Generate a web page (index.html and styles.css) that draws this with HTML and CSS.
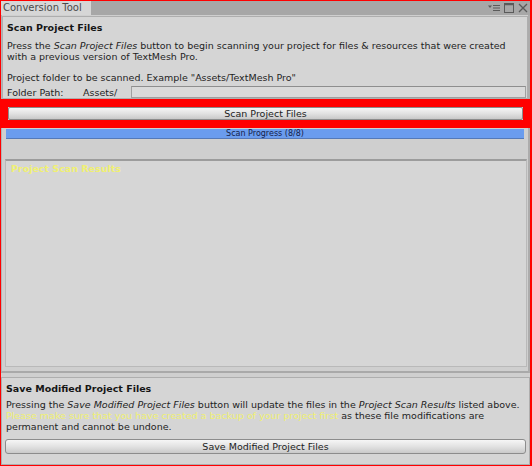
FILE: index.html
```html
<!DOCTYPE html>
<html>
<head>
<meta charset="utf-8">
<link rel="stylesheet" href="styles.css">
</head>
<body>
<div class="window">
  <div class="tabbar">
    <div class="tab">Conversion Tool</div>
    <div class="tab-icons">
      <svg class="ico-menu" width="12" height="8" viewBox="0 0 12 8">
        <path d="M0 1.5h4L2 4z" fill="#5a5a5a"/>
        <path d="M5 1.5h7M5 4h7M5 6.5h7" stroke="#5a5a5a" stroke-width="1.2"/>
      </svg>
      <svg class="ico-max" width="10" height="10" viewBox="0 0 10 10">
        <rect x="0.5" y="0.5" width="9" height="9" fill="none" stroke="#5a5a5a"/>
        <path d="M0 1.5h10" stroke="#5a5a5a" stroke-width="1.5"/>
      </svg>
      <svg class="ico-close" width="10" height="10" viewBox="0 0 10 10">
        <path d="M1 1l8 8M9 1l-8 8" stroke="#5a5a5a" stroke-width="1.3"/>
      </svg>
    </div>
  </div>

  <div class="scan-area">
    <section class="box scan-box">
      <h2 class="box-title">Scan Project Files</h2>
      <p class="text">Press the <i>Scan Project Files</i> button to begin scanning your project for files &amp; resources that were created<br>with a previous version of TextMesh Pro.</p>
      <p class="text spaced">Project folder to be scanned. Example "Assets/TextMesh Pro"</p>
      <div class="folder-row">
        <span class="folder-label">Folder Path:</span>
        <span class="folder-prefix">Assets/</span>
        <span class="folder-input"></span>
      </div>
    </section>

    <div class="highlight">
      <button class="btn btn-scan">Scan Project Files</button>
    </div>
    <div class="progress">Scan Progress (8/8)</div>

    <div class="results">
      <span class="results-title">Project Scan Results</span>
    </div>
  </div>

  <section class="box save-box">
    <h2 class="box-title">Save Modified Project Files</h2>
    <p class="text">Pressing the <i>Save Modified Project Files</i> button will update the files in the <i>Project Scan Results</i> listed above.<br><span class="warn">Please make sure that you have created a backup of your project first</span> as these file modifications are<br>permanent and cannot be undone.</p>
    <button class="btn btn-save">Save Modified Project Files</button>
  </section>
</div>
</body>
</html>
```

FILE: styles.css
```css
html, body {
  margin: 0;
  padding: 0;
  background: #d0d0d0;
}

body {
  font-family: "DejaVu Sans", sans-serif;
  font-size: 9.5px;
  color: #1e1e1e;
}

.window {
  width: 529px;
  height: 464px;
  border: 1px solid #ff0000;
  border-right-width: 2px;
  background: #cfcfcf;
  display: flex;
  flex-direction: column;
  overflow: hidden;
}

/* tab strip */
.tabbar {
  height: 14px;
  background: #a7a7a7;
  display: flex;
  align-items: stretch;
  flex-shrink: 0;
}

.tab {
  width: 88px;
  background: #d6d6d6;
  color: #4a4a4a;
  font-size: 10px;
  line-height: 13px;
  padding-left: 2px;
  white-space: nowrap;
}

.tab-icons {
  margin-left: auto;
  display: flex;
  align-items: center;
  gap: 4px;
  padding-right: 2px;
}

/* upper scroll area */
.scan-area {
  height: 356px;
  border-left: 1px solid #b4b4b4;
  border-right: 2px solid #acacac;
  border-bottom: 2px solid #a9a9a9;
  display: flex;
  flex-direction: column;
  flex-shrink: 0;
}

.box {
  background: #d5d5d5;
  border: 1px solid #aeaeae;
}

.scan-box {
  margin: 1px 0 0 0;
  padding: 5px 1px 0 4px;
}

.box-title {
  margin: 0 0 7px 0;
  font-size: 9.5px;
  line-height: 11px;
  font-weight: bold;
  color: #151515;
}

.text {
  margin: 0;
  line-height: 11px;
  white-space: nowrap;
}

.text.spaced {
  margin-top: 10px;
}

.folder-row {
  margin-top: 3px;
  height: 12px;
  display: flex;
  align-items: center;
}

.folder-label {
  width: 76px;
}

.folder-prefix {
  width: 48px;
}

.folder-input {
  flex: 1;
  height: 10px;
  background: #dadada;
  border: 1px solid #a0a0a0;
  border-top-color: #8e8e8e;
}

/* red call-out frame around the scan button */
.highlight {
  margin: 0 -2px 0 -1px;
  border: 7px solid #ff0000;
  border-top-width: 8px;
  border-bottom-width: 8px;
}

/* buttons */
.btn {
  display: block;
  width: 100%;
  font-family: "DejaVu Sans", sans-serif;
  font-size: 9.5px;
  color: #1c1c1c;
  line-height: 11px;
  padding: 0;
  border: 1px solid #8c8c8c;
  border-radius: 3px;
  background: linear-gradient(#f6f6f6, #e2e2e2 50%, #c9c9c9);
}

.btn-scan {
  height: 13px;
  border-radius: 2px;
}

.progress {
  margin: 1px 4px 0 4px;
  height: 9px;
  background: #6a9cee;
  border-bottom: 1px solid #5479b8;
  color: #14224a;
  font-size: 8px;
  line-height: 9px;
  text-align: center;
}

.results {
  margin: 20px 1px 0 3px;
  flex: 1;
  margin-bottom: 4px;
  background: #d6d6d6;
  border: 1px solid #b9b9b9;
  border-top: 2px solid #9c9c9c;
  padding: 2px 5px;
}

.results-title {
  color: #f0f072;
  font-size: 9.5px;
  font-weight: bold;
  line-height: 11px;
}

/* lower save panel */
.save-box {
  margin-top: 4px;
  padding: 5px 1px 0 4px;
  flex: 1;
}

.save-box .box-title {
  margin-bottom: 5px;
}

.warn {
  color: #f0f072;
}

.btn-save {
  margin: 7px 2px 0 -1px;
  width: calc(100% - 1px);
  height: 15px;
}
```
